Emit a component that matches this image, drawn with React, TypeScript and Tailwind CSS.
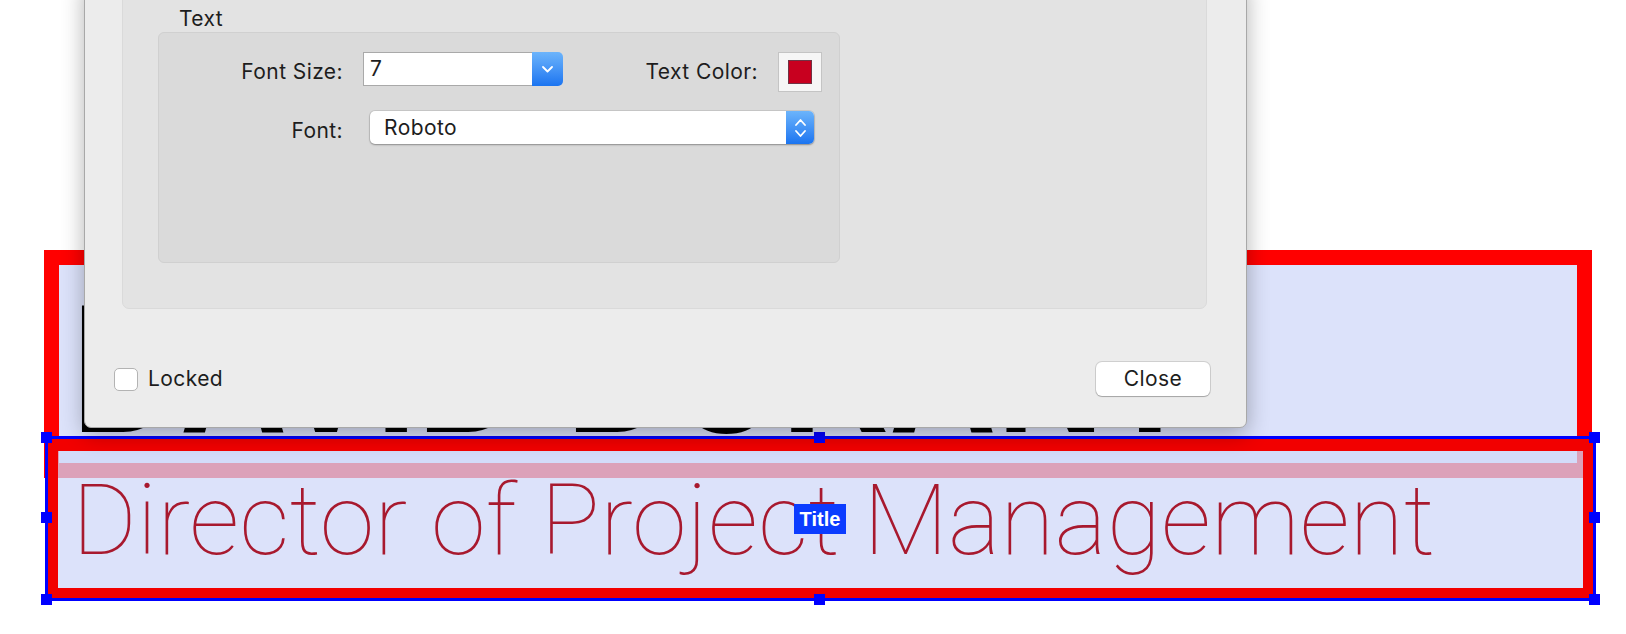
function ChevronDown() {
  return (
    <svg width="11" height="7" viewBox="0 0 11 7" fill="none">
      <path d="M1 1l4.5 4.5L10 1" stroke="white" strokeWidth="1.8" strokeLinecap="round" strokeLinejoin="round" />
    </svg>
  );
}

function ChevronUpDown() {
  return (
    <svg width="11" height="20" viewBox="0 0 11 20" fill="none">
      <path d="M1 7l4.5-5L10 7" stroke="white" strokeWidth="1.8" strokeLinecap="round" strokeLinejoin="round" />
      <path d="M1 13l4.5 5L10 13" stroke="white" strokeWidth="1.8" strokeLinecap="round" strokeLinejoin="round" />
    </svg>
  );
}

function Handle({ className }: { className: string }) {
  return <div className={`absolute h-[11px] w-[11px] bg-[#0000ff] ${className}`} />;
}

export default function App() {
  return (
    <div className="relative h-[634px] w-[1626px] overflow-hidden bg-white">
      {/* canvas: name element */}
      <div className="absolute left-[44px] top-[250px] h-[228px] w-[1548px] border-[15px] border-[#ff0000] bg-[rgba(208,216,248,0.745)]" />
      <div className="absolute left-[72px] top-[276px] origin-left scale-x-[0.81] whitespace-nowrap font-['Liberation_Sans',Arial,sans-serif] text-[184px] font-bold leading-none text-black">
        DAVID DURANT
      </div>

      {/* canvas: title element (selected) */}
      <div className="absolute left-[48px] top-[439px] h-[159px] w-[1545px] border-[10px] border-t-[12px] border-[#f20000] bg-[rgba(208,216,248,0.745)] pl-[14px] pt-[20px]">
        <p className="whitespace-nowrap font-['Roboto',sans-serif] text-[99px] font-thin leading-none text-[#a8192e]">
          Director of Project Management
        </p>
      </div>
      <div className="absolute left-[45px] top-[436px] h-[165px] w-[1551px] border-[3px] border-[#0000ff]" />
      <Handle className="left-[41px] top-[432px]" />
      <Handle className="left-[814px] top-[432px]" />
      <Handle className="left-[1589px] top-[432px]" />
      <Handle className="left-[41px] top-[512px]" />
      <Handle className="left-[1589px] top-[512px]" />
      <Handle className="left-[41px] top-[594px]" />
      <Handle className="left-[814px] top-[594px]" />
      <Handle className="left-[1589px] top-[594px]" />
      <div className="absolute left-[794px] top-[504px] flex h-[30px] w-[52px] items-center justify-center bg-[#0b3cff] font-['Liberation_Sans',Arial,sans-serif] text-[20px] font-bold text-white">
        Title
      </div>

      {/* inspector dialog */}
      <div className="absolute left-[84px] top-[-20px] flex h-[448px] w-[1163px] flex-col rounded-b-[7px] border border-[#a8a8a8] bg-[#ececec] font-['Inter','Noto_Sans',sans-serif] text-[21px] tracking-[0.02em] text-[#1d1d1d] shadow-[0_6px_22px_rgba(0,0,0,0.3)]">
        <section className="ml-[37px] mr-[39px] mt-[9px] h-[319px] rounded-[7px] border border-[#dadada] bg-[#e3e3e3] px-[35px] pt-[16px]">
          <p className="h-[24px] pl-[21px] leading-[24px]">Text</p>
          <div className="mt-[1px] h-[231px] w-[682px] rounded-[6px] border border-[#d0d0d0] bg-[#dadada] pt-[19px]">
            <div className="flex h-[40px] items-start">
              <span className="w-[184px] text-right leading-[40px]">Font Size:</span>
              <div className="ml-[20px] flex h-[34px] w-[200px]">
                <div className="flex-1 border border-r-0 border-[#a9a9a9] bg-white pl-[6px] leading-[32px]">7</div>
                <div className="flex w-[31px] items-center justify-center rounded-r-[5px] bg-linear-to-b from-[#6cb4fb] to-[#1a74f0]">
                  <ChevronDown />
                </div>
              </div>
              <span className="w-[215px] pr-[20px] text-right leading-[40px]">Text Color:</span>
              <div className="flex h-[40px] w-[44px] items-center justify-center border border-[#c4c4c4] bg-[#f6f6f6]">
                <div className="h-[24px] w-[24px] border border-[#6f3445] bg-[#c8001f]" />
              </div>
            </div>
            <div className="mt-[19px] flex items-start">
              <span className="w-[184px] pt-[3px] text-right leading-[33px]">Font:</span>
              <div className="ml-[27px] flex h-[33px] w-[444px] rounded-[5px] bg-white shadow-[0_0_0_1px_rgba(0,0,0,0.08),0_1px_2px_rgba(0,0,0,0.3)]">
                <div className="flex-1 pl-[14px] leading-[33px]">Roboto</div>
                <div className="flex w-[28px] items-center justify-center rounded-r-[5px] bg-linear-to-b from-[#6cb4fb] to-[#1a74f0]">
                  <ChevronUpDown />
                </div>
              </div>
            </div>
          </div>
        </section>

        <div className="mt-[53px] flex items-center justify-between pl-[29px] pr-[36px]">
          <label className="flex items-center gap-[10px]">
            <span className="h-[23px] w-[24px] rounded-[5px] border border-[#b3b3b3] bg-white" />
            Locked
          </label>
          <button className="h-[34px] w-[114px] rounded-[6px] bg-white text-[21px] tracking-[0.02em] text-[#1d1d1d] shadow-[0_0_0_1px_rgba(0,0,0,0.12),0_1px_1px_rgba(0,0,0,0.2)]">
            Close
          </button>
        </div>
      </div>
    </div>
  );
}
